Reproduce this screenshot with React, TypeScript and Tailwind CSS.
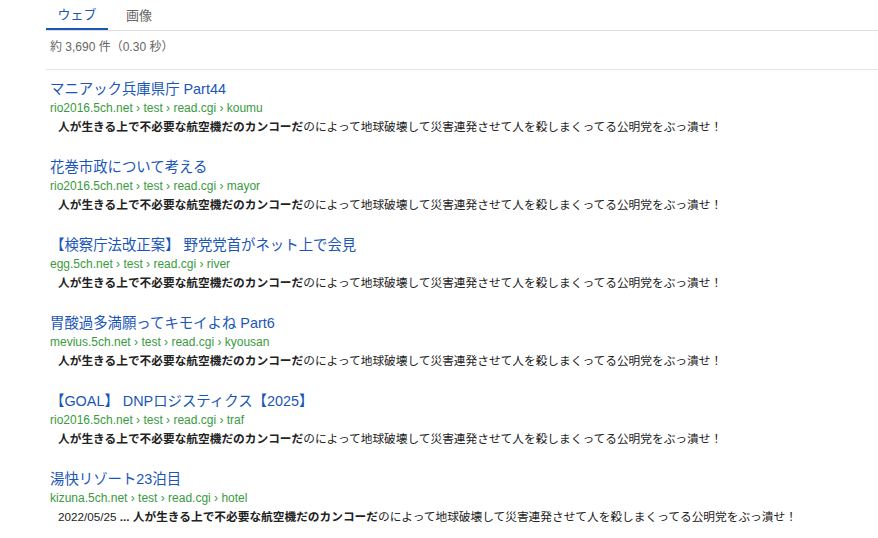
import React from 'react';

const results = [
  { title: 'マニアック兵庫県庁 Part44', host: 'rio2016.5ch.net', board: 'koumu' },
  { title: '花巻市政について考える', host: 'rio2016.5ch.net', board: 'mayor' },
  { title: '【検察庁法改正案】 野党党首がネット上で会見', host: 'egg.5ch.net', board: 'river' },
  { title: '胃酸過多満願ってキモイよね Part6', host: 'mevius.5ch.net', board: 'kyousan' },
  { title: '【GOAL】 DNPロジスティクス【2025】', host: 'rio2016.5ch.net', board: 'traf' },
  { title: '湯快リゾート23泊目', host: 'kizuna.5ch.net', board: 'hotel', date: '2022/05/25' },
];

const font = { fontFamily: 'Arial, "Liberation Sans", "Noto Sans CJK JP", sans-serif' };

export default function App() {
  return (
    <div className="w-[878px] h-[538px] bg-white overflow-hidden" style={font}>
      <div className="ml-[46px]">
        {/* tabs */}
        <div className="flex h-[31px] border-b border-[#dfdfdf]">
          <div className="w-[62px] flex items-center justify-center text-[13px] text-[#1a56b8] border-b-2 border-[#1a56b8] pt-[1px]">
            ウェブ
          </div>
          <div className="w-[62px] flex items-center justify-center text-[13px] text-[#666] pt-[1px]">
            画像
          </div>
        </div>

        <div className="h-[39px] border-b border-[#e4e4e4] pl-[4px] pt-[8px] text-[12px] leading-[16px] text-[#666]">
          約 3,690 件（0.30 秒）
        </div>

        {/* results */}
        <div className="pl-[4px] pt-[9px]">
          {results.map((r, i) => (
            <div key={i} className="h-[78px]">
              <div className="text-[14.4px] leading-[20px] text-[#1a56b8]">{r.title}</div>
              <div className="text-[12px] leading-[18px] text-[#3a9a3e]">
                {r.host} › test › read.cgi › {r.board}
              </div>
              <div className="pl-[8px] text-[11.7px] leading-[20px] text-[#222]">
                {r.date && <span>{r.date} <b>...</b> </span>}
                <b>人が生きる上で不必要な航空機だのカンコーだ</b>のによって地球破壊して災害連発させて人を殺しまくってる公明党をぶっ潰せ！
              </div>
            </div>
          ))}
        </div>
      </div>
    </div>
  );
}
